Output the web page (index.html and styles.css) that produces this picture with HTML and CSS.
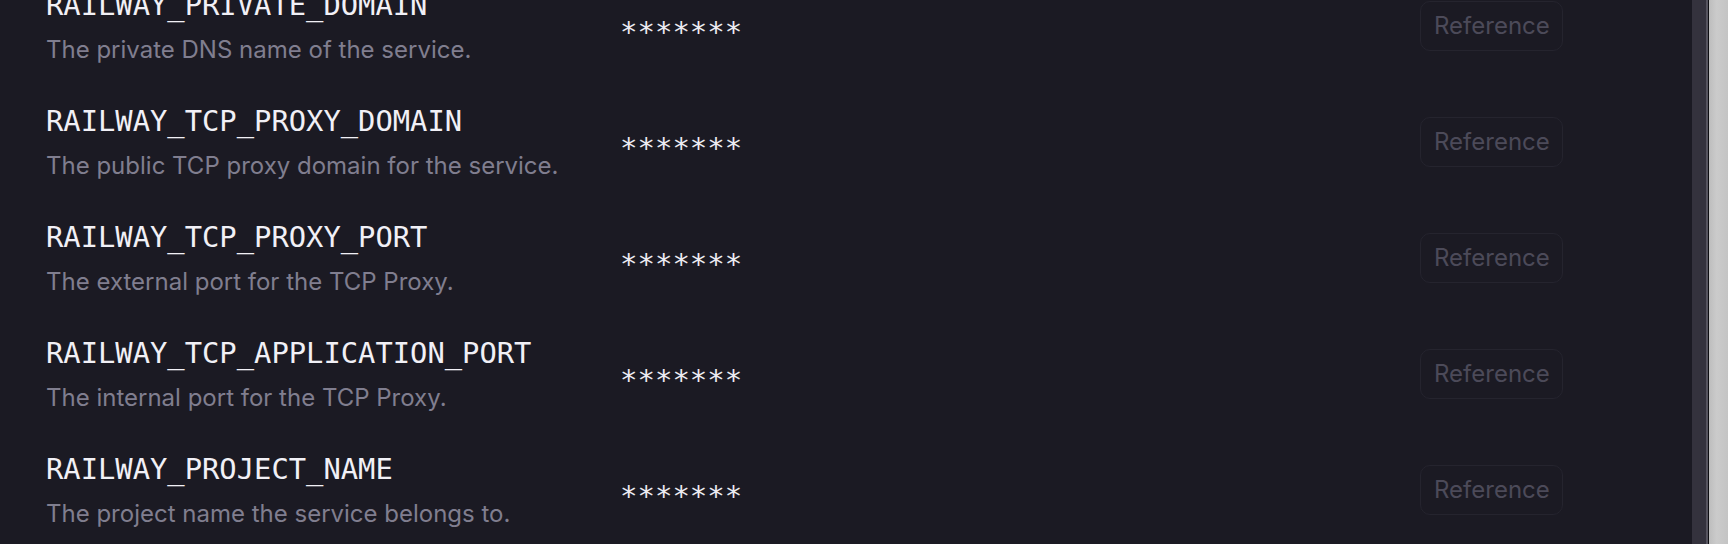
FILE: index.html
```html
<!DOCTYPE html>
<html>
<head>
<meta charset="utf-8">
<link rel="stylesheet" href="styles.css">
</head>
<body>
<div class="screen">
  <div class="window">
    <div class="content">
      <div class="var-list">
        <div class="var-row">
          <div class="var-info">
            <div class="var-name">RAILWAY_PRIVATE_DOMAIN</div>
            <div class="var-desc">The private DNS name of the service.</div>
          </div>
          <div class="var-value">*******</div>
          <div class="var-action"><button class="ref-btn">Reference</button></div>
        </div>
        <div class="var-row">
          <div class="var-info">
            <div class="var-name">RAILWAY_TCP_PROXY_DOMAIN</div>
            <div class="var-desc">The public TCP proxy domain for the service.</div>
          </div>
          <div class="var-value">*******</div>
          <div class="var-action"><button class="ref-btn">Reference</button></div>
        </div>
        <div class="var-row">
          <div class="var-info">
            <div class="var-name">RAILWAY_TCP_PROXY_PORT</div>
            <div class="var-desc">The external port for the TCP Proxy.</div>
          </div>
          <div class="var-value">*******</div>
          <div class="var-action"><button class="ref-btn">Reference</button></div>
        </div>
        <div class="var-row">
          <div class="var-info">
            <div class="var-name">RAILWAY_TCP_APPLICATION_PORT</div>
            <div class="var-desc">The internal port for the TCP Proxy.</div>
          </div>
          <div class="var-value">*******</div>
          <div class="var-action"><button class="ref-btn">Reference</button></div>
        </div>
        <div class="var-row">
          <div class="var-info">
            <div class="var-name">RAILWAY_PROJECT_NAME</div>
            <div class="var-desc">The project name the service belongs to.</div>
          </div>
          <div class="var-value">*******</div>
          <div class="var-action"><button class="ref-btn">Reference</button></div>
        </div>
      </div>
    </div>
    <div class="scrollbar"></div>
  </div>
  <div class="outside"></div>
</div>
</body>
</html>
```

FILE: styles.css
```css
html, body {
  margin: 0;
  padding: 0;
  background: #1b1a23;
  overflow: hidden;
}

.screen {
  display: flex;
  width: 1728px;
  height: 544px;
}

.window {
  display: flex;
  flex: 1;
  background: #1b1a23;
  border-right: 1px solid #0e0e12;
}

.content {
  flex: 1;
  overflow: hidden;
}

.var-list {
  margin-top: -31px;
  padding-left: 46px;
}

.var-row {
  display: grid;
  grid-template-columns: 574px 1fr 143px;
  align-items: center;
  height: 116px;
  padding-right: 129px;
}

.var-info {
  display: flex;
  flex-direction: column;
  gap: 12px;
}

.var-name {
  font-family: "DejaVu Sans Mono", "Liberation Mono", monospace;
  font-size: 28.8px;
  line-height: 34px;
  color: #f1f0f6;
  letter-spacing: 0;
}

.var-desc {
  font-family: Inter, "Noto Sans", sans-serif;
  font-size: 24px;
  line-height: 32px;
  color: #807e8f;
}

.var-value {
  margin-top: 9px;
  font-family: "DejaVu Sans Mono", "Liberation Mono", monospace;
  font-size: 29px;
  line-height: 34px;
  color: #ecebf2;
}

.var-action {
  display: flex;
  margin-top: -2px;
}

.ref-btn {
  box-sizing: border-box;
  width: 143px;
  height: 50px;
  padding: 0 13px;
  border: 1px solid #25242e;
  border-radius: 10px;
  background: #1b1a23;
  color: #4c4a59;
  font-family: Inter, "Noto Sans", sans-serif;
  font-size: 24px;
  line-height: 1;
}

.scrollbar {
  width: 14px;
  background: #34323d;
  border-right: 2px solid #56545f;
}

.outside {
  width: 19px;
  background: linear-gradient(to right, #bdbdbd, #cbcbcb 40%, #c4c4c4);
}
```
